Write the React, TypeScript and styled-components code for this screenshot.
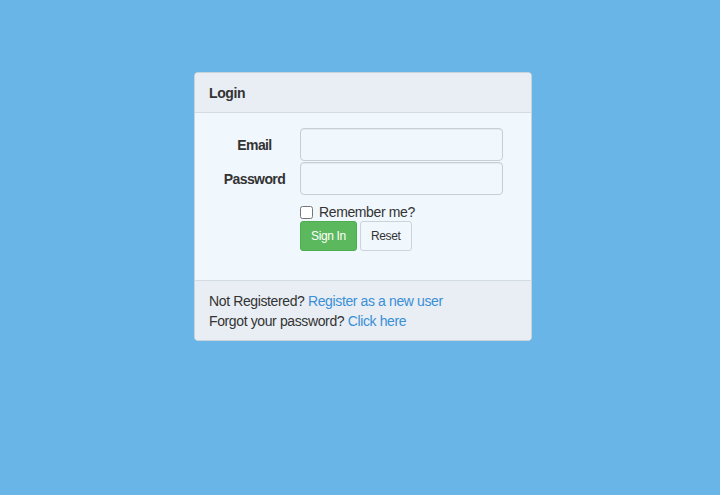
import React from "react";
import styled, { createGlobalStyle } from "styled-components";

const Global = createGlobalStyle`
  html, body { margin: 0; padding: 0; }
  body {
    background: #69b5e7;
    font-family: "Liberation Sans", Arial, sans-serif;
    font-size: 14px;
    letter-spacing: -0.38px;
    color: #333;
    height: 495px;
  }
`;

const Page = styled.div`
  display: flex;
  justify-content: center;
  padding-top: 72px;
  padding-left: 6px;
`;

const Card = styled.div`
  width: 336px;
  border: 1px solid #c9d3dc;
  border-radius: 4px;
  overflow: hidden;
  background: #f0f7fd;
`;

const Header = styled.div`
  height: 39px;
  display: flex;
  align-items: center;
  padding: 0 14px;
  background: #e8eef4;
  border-bottom: 1px solid #d3dbe3;
  font-weight: bold;
  font-size: 14px;
  letter-spacing: -0.4px;
  color: #333;
`;

const Body = styled.div`
  padding: 15px 14px 29px 14px;
`;

const Form = styled.div`
  display: grid;
  grid-template-columns: 91px 203px;
  row-gap: 1px;
  align-items: center;
`;

const Label = styled.label`
  text-align: center;
  font-weight: bold;
  font-size: 14px;
  letter-spacing: -0.6px;
  color: #333;
`;

const Input = styled.input`
  box-sizing: border-box;
  height: 33px;
  width: 203px;
  border: 1px solid #c8ced4;
  border-radius: 4px;
  background: #f0f7fd;
  box-shadow: inset 0 1px 1px rgba(0, 0, 0, 0.06);
  padding: 6px 10px;
  font-size: 14px;
  margin: 0;
`;

const Actions = styled.div`
  grid-column: 2;
  display: flex;
  flex-direction: column;
  align-items: flex-start;
  padding-top: 7px;
`;

const Check = styled.label`
  display: flex;
  align-items: center;
  gap: 6px;
  font-size: 14px;
  color: #333;
  height: 18px;
`;

const Box = styled.input`
  margin: 0;
  width: 13px;
  height: 13px;
`;

const Buttons = styled.div`
  display: flex;
  gap: 3px;
`;

const Button = styled.button<{ $primary?: boolean }>`
  box-sizing: border-box;
  height: 30px;
  padding: 0 10px;
  font-family: "Liberation Sans", Arial, sans-serif;
  font-size: 12px;
  letter-spacing: -0.35px;
  border-radius: 3px;
  cursor: pointer;
  border: 1px solid ${(p) => (p.$primary ? "#4cae4c" : "#ccd3da")};
  background: ${(p) => (p.$primary ? "#5cb85c" : "#f0f7fd")};
  color: ${(p) => (p.$primary ? "#fff" : "#333")};
`;

const Footer = styled.div`
  background: #e8eef4;
  border-top: 1px solid #d3dbe3;
  padding: 10px 14px 9px;
  line-height: 20px;
  font-size: 14px;
  color: #333;
`;

const Link = styled.a`
  color: #3a8fd6;
  text-decoration: none;
`;

export default function App() {
  return (
    <>
      <Global />
      <Page>
        <Card>
          <Header>Login</Header>
          <Body>
            <Form>
              <Label htmlFor="email">Email</Label>
              <Input id="email" type="email" />
              <Label htmlFor="password">Password</Label>
              <Input id="password" type="password" />
              <Actions>
                <Check>
                  <Box type="checkbox" />
                  Remember me?
                </Check>
                <Buttons>
                  <Button $primary>Sign In</Button>
                  <Button>Reset</Button>
                </Buttons>
              </Actions>
            </Form>
          </Body>
          <Footer>
            <div>
              Not Registered? <Link href="#">Register as a new user</Link>
            </div>
            <div>
              Forgot your password? <Link href="#">Click here</Link>
            </div>
          </Footer>
        </Card>
      </Page>
    </>
  );
}
